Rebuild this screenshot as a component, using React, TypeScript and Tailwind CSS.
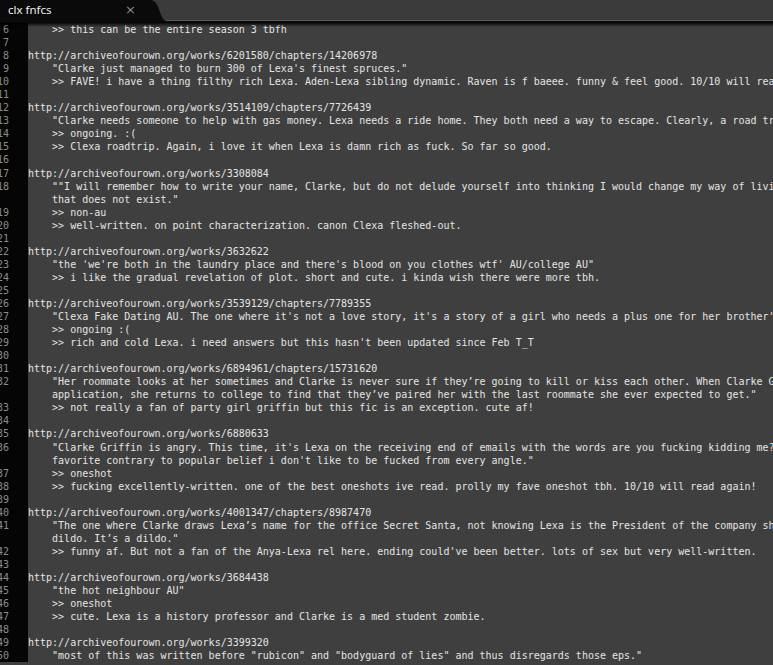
import React from "react";

type Row = { n?: number; t: string };

const rows: Row[] = [
  { n: 6, t: "    >> this can be the entire season 3 tbfh" },
  { n: 7, t: "" },
  { n: 8, t: "http://archiveofourown.org/works/6201580/chapters/14206978" },
  { n: 9, t: "    \"Clarke just managed to burn 300 of Lexa's finest spruces.\"" },
  { n: 10, t: "    >> FAVE! i have a thing filthy rich Lexa. Aden-Lexa sibling dynamic. Raven is f baeee. funny & feel good. 10/10 will read again." },
  { n: 11, t: "" },
  { n: 12, t: "http://archiveofourown.org/works/3514109/chapters/7726439" },
  { n: 13, t: "    \"Clarke needs someone to help with gas money. Lexa needs a ride home. They both need a way to escape. Clearly, a road trip is the answer.\"" },
  { n: 14, t: "    >> ongoing. :(" },
  { n: 15, t: "    >> Clexa roadtrip. Again, i love it when Lexa is damn rich as fuck. So far so good." },
  { n: 16, t: "" },
  { n: 17, t: "http://archiveofourown.org/works/3308084" },
  { n: 18, t: "    \"\"I will remember how to write your name, Clarke, but do not delude yourself into thinking I would change my way of living for a life" },
  { t: "    that does not exist.\"" },
  { n: 19, t: "    >> non-au" },
  { n: 20, t: "    >> well-written. on point characterization. canon Clexa fleshed-out." },
  { n: 21, t: "" },
  { n: 22, t: "http://archiveofourown.org/works/3632622" },
  { n: 23, t: "    \"the 'we're both in the laundry place and there's blood on you clothes wtf' AU/college AU\"" },
  { n: 24, t: "    >> i like the gradual revelation of plot. short and cute. i kinda wish there were more tbh." },
  { n: 25, t: "" },
  { n: 26, t: "http://archiveofourown.org/works/3539129/chapters/7789355" },
  { n: 27, t: "    \"Clexa Fake Dating AU. The one where it's not a love story, it's a story of a girl who needs a plus one for her brother's wedding.\"" },
  { n: 28, t: "    >> ongoing :(" },
  { n: 29, t: "    >> rich and cold Lexa. i need answers but this hasn't been updated since Feb T_T" },
  { n: 30, t: "" },
  { n: 31, t: "http://archiveofourown.org/works/6894961/chapters/15731620" },
  { n: 32, t: "    \"Her roommate looks at her sometimes and Clarke is never sure if they\u2019re going to kill or kiss each other. When Clarke Griffin fills out her" },
  { t: "    application, she returns to college to find that they\u2019ve paired her with the last roommate she ever expected to get.\"" },
  { n: 33, t: "    >> not really a fan of party girl griffin but this fic is an exception. cute af!" },
  { n: 34, t: "" },
  { n: 35, t: "http://archiveofourown.org/works/6880633" },
  { n: 36, t: "    \"Clarke Griffin is angry. This time, it's Lexa on the receiving end of emails with the words are you fucking kidding me? as her" },
  { t: "    favorite contrary to popular belief i don't like to be fucked from every angle.\"" },
  { n: 37, t: "    >> oneshot" },
  { n: 38, t: "    >> fucking excellently-written. one of the best oneshots ive read. prolly my fave oneshot tbh. 10/10 will read again!" },
  { n: 39, t: "" },
  { n: 40, t: "http://archiveofourown.org/works/4001347/chapters/8987470" },
  { n: 41, t: "    \"The one where Clarke draws Lexa\u2019s name for the office Secret Santa, not knowing Lexa is the President of the company she works for and a" },
  { t: "    dildo. It\u2019s a dildo.\"" },
  { n: 42, t: "    >> funny af. But not a fan of the Anya-Lexa rel here. ending could've been better. lots of sex but very well-written." },
  { n: 43, t: "" },
  { n: 44, t: "http://archiveofourown.org/works/3684438" },
  { n: 45, t: "    \"the hot neighbour AU\"" },
  { n: 46, t: "    >> oneshot" },
  { n: 47, t: "    >> cute. Lexa is a history professor and Clarke is a med student zombie." },
  { n: 48, t: "" },
  { n: 49, t: "http://archiveofourown.org/works/3399320" },
  { n: 50, t: "    \"most of this was written before \"rubicon\" and \"bodyguard of lies\" and thus disregards those eps.\"" },
];

export default function App() {
  return (
    <div className="w-[773px] h-[665px] overflow-hidden bg-[#3f3f3f] flex flex-col">
      {/* Tab bar */}
      <div className="h-[22px] shrink-0 flex bg-[#3b3b3b] relative">
        <div className="w-[150px] h-full bg-[#0a0a0a] flex items-center justify-between pl-[8px] pr-[14px]">
          <span className="text-[11.5px] text-[#f0f0f0] leading-none pb-[3px] [font-family:'Noto_Sans',sans-serif]">
            clx fnfcs
          </span>
          <span className="text-[13px] text-[#8a8a8a] leading-none pb-[3px] [font-family:'DejaVu_Sans',sans-serif]">
            ×
          </span>
        </div>
        <svg width="16" height="22" viewBox="0 0 16 22" className="block">
          <path d="M0 0 C6 0 8 6 10 12 C11.5 17 13 20 16 21 L16 22 L0 22 Z" fill="#0a0a0a" />
        </svg>
        <div className="flex-1 flex flex-col">
          <div className="flex-1" />
          <div className="h-px bg-[#5a5a5a]" />
          <div className="h-px bg-[#0a0a0a]" />
        </div>
      </div>
      {/* Editor */}
      <div className="flex-1 relative overflow-hidden">
        <div className="absolute left-0 right-0 top-0 h-[5px] bg-gradient-to-b from-[#000000] to-transparent z-10" />
        <div className="flex flex-col pt-[1px] [font-family:'DejaVu_Sans_Mono',monospace] text-[10px]">
          {rows.map((r, i) => (
            <div key={i} className="flex h-[13.06px] leading-[13.06px]">
              <div className="w-[28px] shrink-0 bg-[#050505] overflow-hidden relative">
                <div className="w-[9px] flex justify-end text-[#8c8c8c]">
                  {r.n !== undefined ? <span className="whitespace-pre">{r.n}</span> : null}
                </div>
              </div>
              <div className="flex-1 whitespace-pre overflow-hidden text-[#e4e4e4]">
                {r.t}
              </div>
            </div>
          ))}
        </div>
        <div className="flex-1 bg-[#3f3f3f]" />
      </div>
    </div>
  );
}
